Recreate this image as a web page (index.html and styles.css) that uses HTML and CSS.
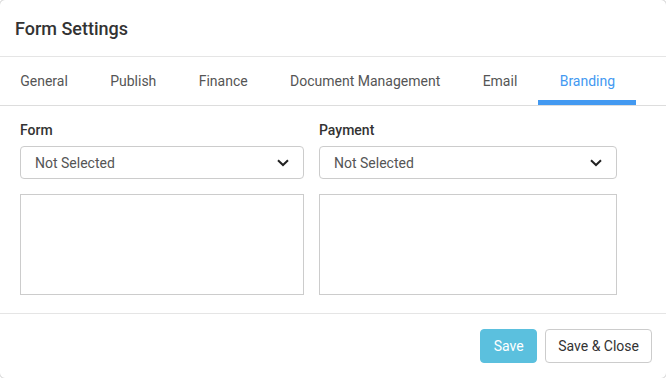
FILE: index.html
```html
<!DOCTYPE html>
<html>
<head>
<meta charset="utf-8">
<link rel="stylesheet" href="styles.css">
</head>
<body>
<div class="modal">
  <div class="modal-header"><h4 class="title">Form Settings</h4></div>
  <ul class="tabs">
    <li class="tab">General</li>
    <li class="tab">Publish</li>
    <li class="tab">Finance</li>
    <li class="tab">Document Management</li>
    <li class="tab">Email</li>
    <li class="tab active">Branding</li>
  </ul>
  <div class="modal-body">
    <div class="col col-left">
      <label class="label">Form</label>
      <div class="select"><span>Not Selected</span>
        <svg class="chev" width="12" height="8" viewBox="0 0 12 8"><path d="M1 1.2 L6 6 L11 1.2" fill="none" stroke="#222" stroke-width="2"/></svg>
      </div>
      <div class="box"></div>
    </div>
    <div class="col col-right">
      <label class="label">Payment</label>
      <div class="select"><span>Not Selected</span>
        <svg class="chev" width="12" height="8" viewBox="0 0 12 8"><path d="M1 1.2 L6 6 L11 1.2" fill="none" stroke="#222" stroke-width="2"/></svg>
      </div>
      <div class="box"></div>
    </div>
  </div>
  <div class="modal-footer">
    <button class="btn btn-save">Save</button>
    <button class="btn btn-default">Save &amp; Close</button>
  </div>
</div>
</body>
</html>
```
FILE: styles.css
```css
html, body {
  margin: 0;
  padding: 0;
  background: #fff;
  overflow: hidden;
  font-family: Roboto, "Liberation Sans", sans-serif;
  color: #333;
}
.modal {
  width: 666px;
  margin: -1px 0 0 -1px;
  border: 1px solid #cfcfcf;
  border-radius: 6px;
  background: #fff;
}
.modal-header {
  height: 56px;
  display: flex;
  align-items: center;
  padding: 0 15px;
  border-bottom: 1px solid #e5e5e5;
}
.title {
  margin: 0;
  font-size: 18px;
  font-weight: 500;
  color: #333;
}
.tabs {
  list-style: none;
  margin: 0;
  padding: 0;
  display: flex;
  height: 48px;
  border-bottom: 1px solid #ddd;
}
.tab {
  padding: 0 21.2px;
  display: flex;
  align-items: center;
  font-size: 14px;
  color: #555;
  border-bottom: 5px solid transparent;
  padding-top: 5px;
  box-sizing: border-box;
  height: 48px;
}
.tab:first-child { margin-left: -1px; }
.tab.active {
  color: #4399f1;
  border-bottom-color: #4399f1;
}
.modal-body {
  display: grid;
  grid-template-columns: 284px 298px;
  column-gap: 15px;
  padding: 14px 20px 18px 20px;
}
.col {
  display: flex;
  flex-direction: column;
}
.label {
  font-size: 14px;
  font-weight: 500;
  line-height: 20px;
  color: #333;
  margin-bottom: 6px;
}
.select {
  height: 33px;
  box-sizing: border-box;
  border: 1px solid #ccc;
  border-radius: 4px;
  display: flex;
  align-items: center;
  justify-content: space-between;
  padding: 0 14px 0 14px;
  font-size: 14px;
  color: #555;
}
.chev { margin-right: 0; }
.box {
  margin-top: 15px;
  height: 101px;
  box-sizing: border-box;
  border: 1px solid #ccc;
}
.modal-footer {
  border-top: 1px solid #e5e5e5;
  padding: 15px 14px 15px 15px;
  display: flex;
  justify-content: flex-end;
  gap: 8px;
}
.btn {
  font-family: Roboto, "Liberation Sans", sans-serif;
  font-size: 14px;
  height: 34px;
  border-radius: 4px;
  padding: 0 12px;
  cursor: pointer;
}
.btn-save {
  background: #5bc0de;
  border: 1px solid #5bc0de;
  color: #fff;
  width: 57px;
}
.btn-default {
  background: #fff;
  border: 1px solid #ccc;
  color: #333;
}
```
